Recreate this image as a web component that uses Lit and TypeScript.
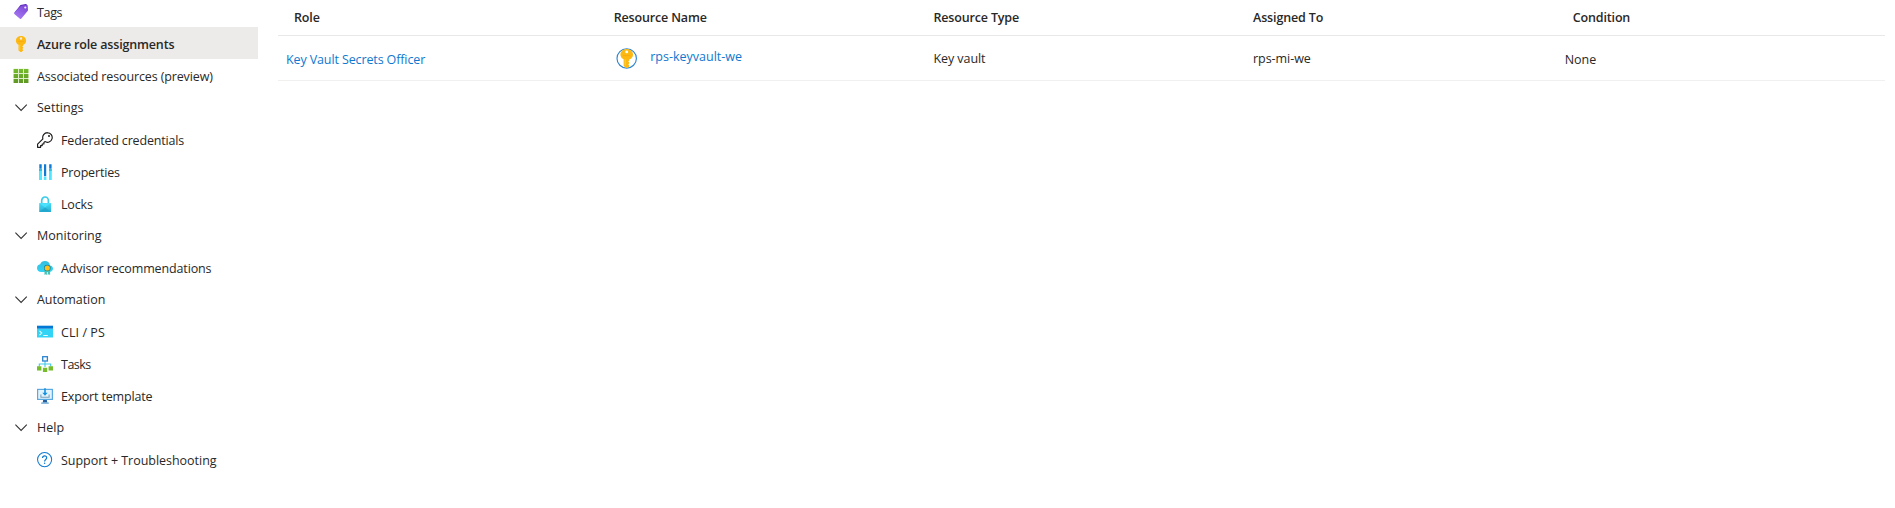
import { LitElement, html, svg, css, TemplateResult } from "lit";
import { customElement } from "lit/decorators.js";
import { classMap } from "lit/directives/class-map.js";

type Kind = "item" | "group" | "child";

interface NavEntry {
  label: string;
  icon: string;
  kind: Kind;
  tracking: number;
  selected?: boolean;
}

const NAV: NavEntry[] = [
  { label: "Tags", icon: "tag", kind: "item", tracking: -0.35 },
  { label: "Azure role assignments", icon: "key", kind: "item", tracking: -0.16, selected: true },
  { label: "Associated resources (preview)", icon: "grid", kind: "item", tracking: -0.13 },
  { label: "Settings", icon: "chevron", kind: "group", tracking: 0.02 },
  { label: "Federated credentials", icon: "outlineKey", kind: "child", tracking: -0.17 },
  { label: "Properties", icon: "bars", kind: "child", tracking: -0.17 },
  { label: "Locks", icon: "lock", kind: "child", tracking: -0.15 },
  { label: "Monitoring", icon: "chevron", kind: "group", tracking: 0.03 },
  { label: "Advisor recommendations", icon: "advisor", kind: "child", tracking: -0.14 },
  { label: "Automation", icon: "chevron", kind: "group", tracking: -0.06 },
  { label: "CLI / PS", icon: "terminal", kind: "child", tracking: 0.06 },
  { label: "Tasks", icon: "tree", kind: "child", tracking: -0.5 },
  { label: "Export template", icon: "exporter", kind: "child", tracking: -0.15 },
  { label: "Help", icon: "chevron", kind: "group", tracking: 0 },
  { label: "Support + Troubleshooting", icon: "help", kind: "child", tracking: -0.03 },
];

const keyShape = svg`
  <path fill="#fdb913" fill-rule="evenodd" d="M8 0C5.200 0 2.900 2 2.900 4.700c0 1.900 1.100 3.400 2.600 4.100v5.600L7.600 16h.9l1.500-1.200v-1l-.7-.8.7-.8v-.9l-.7-.8.8-.8V8.900C12 8.200 13.100 6.700 13.100 4.700 13.100 2 10.800 0 8 0Zm0 1.300a1.200 1.200 0 1 1 0 2.400 1.200 1.200 0 0 1 0-2.400Z"/>
  <path fill="#ffd23c" d="M6.400 8.800h.8v5.400l-.8-.6z"/>
  <path fill="#f8a10c" d="M5.200 5.400h5.600v.6H5.200z"/>`;

const ICONS: Record<string, TemplateResult> = {
  tag: svg`
    <defs><linearGradient id="tg" x1="0.800" y1="0" x2="0.300" y2="1"><stop offset="0" stop-color="#7b45d3"/><stop offset="1" stop-color="#a67af4"/></linearGradient></defs>
    <path fill="#5f2abb" d="M7.500.900 12.700 0c.7 0 1 .2 1.100.8L6.500 9 1.500 8.500z"/>
    <path fill="url(#tg)" d="M8.600 1.700 13.500.800c.7-.1 1.100.2 1.200.900l.3 4.300c0 .4-.1.800-.4 1.100l-6.200 7.500c-.4.500-1 .500-1.500.1L1.400 10.100c-.5-.5-.5-1-.1-1.500l6.300-6.400c.3-.3.600-.4 1-.5Z"/>
    <circle cx="12.300" cy="3.500" r="1.100" fill="#f0eaff"/>`,
  key: keyShape,
  grid: svg`
    <defs><linearGradient id="gr" gradientUnits="userSpaceOnUse" x1="0" y1="1" x2="0" y2="15"><stop offset="0" stop-color="#76bc2d"/><stop offset="1" stop-color="#5e9624"/></linearGradient></defs>
    <rect x=".6" y=".6" width="14.800" height="14.400" fill="#dcefc8"/>
    <path fill="url(#gr)" d="M.6 1H5v4H.6zM6 1h4v4H6zM11 1h4.400v4H11zM.6 6H5v4H.6zM6 6h4v4H6zM11 6h4.400v4H11zM.6 11H5v4H.6zM6 11h4v4H6zM11 11h4.400v4H11z"/>`,
  chevron: svg`<path fill="none" stroke="#323130" stroke-width="1.050" d="m2.400 5.700 5.700 5.700 5.700-5.700"/>`,
  outlineKey: svg`
    <path fill="none" stroke="#1b1a19" stroke-width="1.150" stroke-linejoin="round" d="M10.500.7a4.800 4.800 0 0 0-4.600 6.200L.6 12.200v3.100h3v-1.700h1.600V12h1.700v-1.500l1-.9A4.800 4.800 0 1 0 10.500.7Z"/>
    <circle cx="12" cy="4" r="1" fill="#1b1a19"/>`,
  bars: svg`
    <path fill="#50e6ff" d="M2 5.500h3V16H2zM12 5.500h2.800V16H12z"/>
    <path fill="#32bedd" d="M2 5h3v2H2zM12 5h2.800v2H12z"/>
    <path fill="#0f7bd4" d="M2.300.300h2.400v4.500H2.300zM7 .300h2.200v12H7zM12.200.300h2.400v4.500h-2.400z"/>
    <path fill="#50e6ff" d="M6.800 12.700h2.600V16H6.800z"/>`,
  lock: svg`
    <defs><linearGradient id="lk" x1="0" y1="0" x2="0" y2="1"><stop offset="0" stop-color="#45dcf8"/><stop offset="1" stop-color="#28afd3"/></linearGradient></defs>
    <path fill="none" stroke="#3ccbe9" stroke-width="1.700" d="M4.700 8V4.700a3.350 3.700 0 0 1 6.700 0V8"/>
    <rect x="2.200" y="7" width="11.900" height="9" rx=".6" fill="url(#lk)"/>
    <path fill="#1d9fc8" fill-opacity=".65" d="m2.400 15.800 5.700-4.300 5.800 4.300z"/>
    <path fill="#50e6ff" fill-opacity=".7" d="m2.400 7.200 5.700 4.300 5.800-4.300z"/>`,
  advisor: svg`
    <defs><linearGradient id="ad" x1="0" y1="0" x2="0" y2="1"><stop offset="0" stop-color="#32bedd"/><stop offset="1" stop-color="#32d4f5"/></linearGradient></defs>
    <path fill="url(#ad)" d="M12.900 5.600A5 5 0 0 0 7.900 1 5 5 0 0 0 3.200 4.300 4 4 0 0 0 0 8.200c0 2.300 1.800 3.800 4.200 3.800H12c2.300 0 4-1.200 4-3.200 0-1.800-1.300-3-3.100-3.200Z"/>
    <path fill="#43c3b8" d="M7.500 10h2.400v5l-1.200-.8-1.200.8zM10.700 10h2.400v5l-1.200-.8-1.200.8z"/>
    <circle cx="10.300" cy="8" r="3.300" fill="#157f9b"/>
    <circle cx="10.300" cy="8" r="2.600" fill="#ffbe18"/>`,
  terminal: svg`
    <path fill="#32d4f5" d="M0 4.700h16v8.800H0z"/>
    <path fill="#0078d4" d="M0 1.700h16v3H0z"/>
    <path fill="none" stroke="#e8fbff" stroke-width="1.050" d="m2.500 6.800 2.300 2.200-2.300 2.200M6.200 11.400h4.600"/>`,
  tree: svg`
    <path fill="none" stroke="#40cbea" stroke-width="1.100" d="M8 5v6M2.300 10.500V8h11.400v2.500"/>
    <rect x="5.700" y=".7" width="4.700" height="4.300" fill="#fff" stroke="#2c84d2" stroke-width="1.300"/>
    <path fill="#76bc2d" d="M0 10.300h4.400v4.300H0zM11.600 10.300H16v4.300h-4.400zM5.900 11.800h4.300V16H5.900z"/>`,
  exporter: svg`
    <rect x=".6" y="1.400" width="14.800" height="10" fill="#e3f3fc" stroke="#5aa9e0" stroke-width="1.200"/>
    <path fill="#1490df" d="M7.200.300h1.600v4.500h1.900L8 7.700 5.300 4.800h1.900z"/>
    <path fill="none" stroke="#7a9fb8" stroke-width="1.100" d="M3.900 6.500v2.700h8.200V6.500"/>
    <path fill="#1f5d9f" d="M6.200 12h3.600l.5 2.600H5.700z"/>
    <path fill="#5b9dd0" d="M4.200 14.500h7.600v1.200H4.200z"/>`,
  help: svg`
    <circle cx="7.600" cy="7.600" r="7.050" fill="none" stroke="#0f7ad1" stroke-width="1.050"/>
    <path fill="none" stroke="#0f7ad1" stroke-width="1.200" d="M5.500 6c0-1.300.9-2.100 2.100-2.100s2.100.8 2.100 1.900c0 1.600-2.100 1.700-2.100 3.600"/>
    <circle cx="7.600" cy="11.300" r=".75" fill="#0f7ad1"/>`,
};

const fontRules = css`
  :host {
    font-family: "Open Sans", "Noto Sans", sans-serif;
    font-size: 12.5px;
    color: #292827;
  }
  * {
    box-sizing: border-box;
  }
`;

@customElement("side-nav")
export class SideNav extends LitElement {
  static styles = [
    fontRules,
    css`
      :host {
        display: block;
        width: 258px;
        flex: none;
      }
      .list {
        display: flex;
        flex-direction: column;
        margin-top: -5px;
      }
      .entry {
        display: flex;
        align-items: center;
        gap: 8px;
        height: 32px;
        padding: 2px 0 0 13px;
        line-height: 18px;
        white-space: nowrap;
      }
      .group {
        padding-top: 0;
      }
      .child {
        padding-left: 37px;
      }
      .selected {
        background: #edebe9;
        font-weight: 600;
      }
      .label {
        padding-top: 2px;
      }
      .icon {
        width: 16px;
        height: 16px;
        flex: none;
      }
    `,
  ];

  render() {
    return html`<nav class="list">
      ${NAV.map(
        (e) => html`<div
          class=${classMap({ entry: true, [e.kind]: true, selected: !!e.selected })}
        >
          <svg class="icon" viewBox="0 0 16 16">${ICONS[e.icon]}</svg>
          <span class="label" style="letter-spacing:${e.tracking}px">${e.label}</span>
        </div>`
      )}
    </nav>`;
  }
}

@customElement("role-table")
export class RoleTable extends LitElement {
  static styles = [
    fontRules,
    css`
      :host {
        display: block;
        width: 1607px;
        flex: none;
        letter-spacing: -0.06px;
      }
      .row {
        display: grid;
        grid-template-columns: repeat(4, 319.7px) 1fr;
        align-items: center;
        height: 45px;
        border-bottom: 1px solid #f1f0ef;
        line-height: 18px;
        white-space: nowrap;
      }
      .head {
        height: 36px;
        border-bottom-color: #e9e8e7;
        font-weight: 600;
        letter-spacing: -0.15px;
      }
      .cell {
        display: flex;
        align-items: center;
        padding-left: 16px;
      }
      .text {
        padding-top: 2px;
      }
      .tight {
        padding: 4px 0 0 8px;
      }
      .role {
        letter-spacing: -0.12px;
      }
      .link {
        color: #0f78d0;
      }
      .resource {
        gap: 12.5px;
      }
      .badge {
        width: 24px;
        height: 24px;
        flex: none;
      }
      .name {
        padding-bottom: 2px;
        letter-spacing: 0;
      }
    `,
  ];

  render() {
    const heads = ["Role", "Resource Name", "Resource Type", "Assigned To", "Condition"];
    return html`
      <div class="row head">${heads.map((h) => html`<div class="cell">${h}</div>`)}</div>
      <div class="row">
        <div class="cell tight link role">Key Vault Secrets Officer</div>
        <div class="cell resource link">
          <svg class="badge" viewBox="0 0 24 24">
            <circle cx="12.700" cy="12.400" r="9.700" fill="#fff" stroke="#2f86cf" stroke-width="1.150" />
            <g transform="translate(2.800 2.900) scale(1.240 1.190)">${keyShape}</g>
          </svg>
          <span class="name">rps-keyvault-we</span>
        </div>
        <div class="cell text">Key vault</div>
        <div class="cell text">rps-mi-we</div>
        <div class="cell tight">None</div>
      </div>
    `;
  }
}

@customElement("app-root")
export class AppRoot extends LitElement {
  static styles = css`
    :host {
      display: flex;
      gap: 20px;
      height: 508px;
      overflow: hidden;
      background: #fff;
    }
  `;

  render() {
    return html`<side-nav></side-nav><role-table></role-table>`;
  }
}
